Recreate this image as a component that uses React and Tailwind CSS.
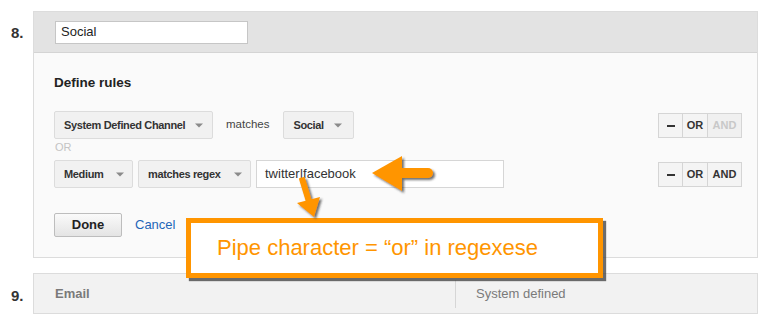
import React from "react";

const Caret = () => (
  <svg width="8" height="5" viewBox="0 0 8 5" className="shrink-0">
    <path d="M0 0.5 L8 0.5 L4 4.5 Z" fill="#8a8a8a" />
  </svg>
);

function Drop({ label, w, pr }) {
  return (
    <div
      className={`flex items-center justify-between h-[28px] ${w} pl-[9px] ${pr} bg-[#f1f1f1] border border-[#dcdcdc] rounded-[2px] text-[11px] tracking-[-0.35px] font-bold text-[#333]`}
    >
      <span className="whitespace-nowrap">{label}</span>
      <Caret />
    </div>
  );
}

function Group({ andDisabled }) {
  return (
    <div className="flex h-[25px] border border-[#d5d5d5] bg-[#f4f4f4] text-[11px] font-bold">
      <div className="w-[24px] flex items-center justify-center border-r border-[#d5d5d5] text-[#333]">
        <span className="block w-[8px] h-[2px] bg-[#333] mt-[2px]" />
      </div>
      <div className="w-[25px] flex items-center justify-center border-r border-[#d5d5d5] text-[#333]">
        OR
      </div>
      <div
        className={`w-[33px] flex items-center justify-center ${
          andDisabled ? "text-[#c8c8c8] bg-[#f0f0f0]" : "text-[#333]"
        }`}
      >
        AND
      </div>
    </div>
  );
}

export default function App() {
  return (
    <div
      className="relative w-[773px] h-[326px] bg-white overflow-hidden pt-[11px]"
      style={{ fontFamily: '"Liberation Sans", Arial, Helvetica, sans-serif' }}
    >
      {/* Item 8 */}
      <div className="flex">
        <div className="w-[33px] pl-[11px] pt-[14px] text-[15px] font-bold text-[#333] leading-none">
          8.
        </div>
        <div className="w-[725px] border border-[#dcdcdc]">
          <div className="h-[41px] bg-[#e3e3e3] border-b border-[#d4d4d4] flex items-center pl-[21px]">
            <div className="w-[193px] h-[23px] bg-white border border-[#c6c6c6] flex items-center pl-[5px] text-[13px] text-[#222]">
              Social
            </div>
          </div>
          <div className="bg-[#fafafa] pl-[20px] pr-[15px] pt-[22px] pb-[20px]">
            <div className="text-[13.5px] font-bold text-[#222] leading-[16px]">Define rules</div>

            <div className="mt-[20px] flex items-center">
              <Drop label="System Defined Channel" w="w-[159px]" pr="pr-[9px]" />
              <span className="ml-[13px] text-[11.5px] text-[#444]">matches</span>
              <div className="ml-[14px]">
                <Drop label="Social" w="w-[71px]" pr="pr-[11px]" />
              </div>
              <div className="ml-auto">
                <Group andDisabled />
              </div>
            </div>

            <div className="text-[11px] text-[#c4c4c4] leading-[12px] mt-[2px] ml-[1px]">OR</div>

            <div className="mt-[7px] flex items-center">
              <Drop label="Medium" w="w-[79px]" pr="pr-[8px]" />
              <div className="ml-[5px]">
                <Drop label="matches regex" w="w-[113px]" pr="pr-[8px]" />
              </div>
              <div className="ml-[5px] w-[248px] h-[28px] bg-white border border-[#d6d6d6] flex items-center pl-[8px] text-[13px] text-[#333]">
                twitter|facebook
              </div>
              <div className="ml-auto">
                <Group />
              </div>
            </div>

            <div className="mt-[25px] flex items-center">
              <button className="w-[68px] h-[24px] rounded-[2px] border border-[#bdbdbd] bg-gradient-to-b from-[#fafafa] to-[#e4e4e4] text-[13px] font-bold text-[#222]">
                Done
              </button>
              <span className="ml-[13px] text-[13px] text-[#1f66b8]">Cancel</span>
            </div>
          </div>
        </div>
      </div>

      {/* Item 9 */}
      <div className="flex mt-[15px]">
        <div className="w-[33px] pl-[11px] pt-[15px] text-[15px] font-bold text-[#333] leading-none">
          9.
        </div>
        <div className="w-[725px] h-[41px] border border-[#dcdcdc] bg-[#f2f2f2] flex items-center">
          <div className="w-[421px] pl-[21px] text-[13px] font-bold text-[#7a7a7a]">Email</div>
          <div className="h-[28px] border-l border-[#d6d6d6]" />
          <div className="pl-[20px] text-[13px] text-[#7a7a7a]">System defined</div>
        </div>
      </div>

      {/* Annotation box */}
      <div className="absolute left-[186px] top-[218px] w-[417px] h-[60px] bg-white border-[5px] border-[#ff9500] shadow-[3px_3px_1px_rgba(60,60,60,0.75)] flex items-center pl-[26px]">
        <span className="text-[22px] text-[#ff9500] leading-none whitespace-nowrap">
          Pipe character = “or” in regexese
        </span>
      </div>

      {/* Arrows */}
      <svg className="absolute left-0 top-0 pointer-events-none" width="773" height="326">
        <defs>
          <filter id="sh" x="-20%" y="-20%" width="150%" height="150%">
            <feDropShadow dx="2" dy="2" stdDeviation="1" floodColor="#333" floodOpacity="0.7" />
          </filter>
        </defs>
        <g filter="url(#sh)" fill="#ff9500">
          <polygon points="372,173 402,156 402,191" />
          <path d="M400 168 L428 168 A5 5 0 0 1 428 178 L400 178 Z" />
          <path d="M300 179 L304 178 L311 201 L307 202 Z" stroke="#ff9500" strokeWidth="2" strokeLinejoin="round" />
          <polygon points="297,203 320,197 314,217" />
        </g>
      </svg>
    </div>
  );
}
